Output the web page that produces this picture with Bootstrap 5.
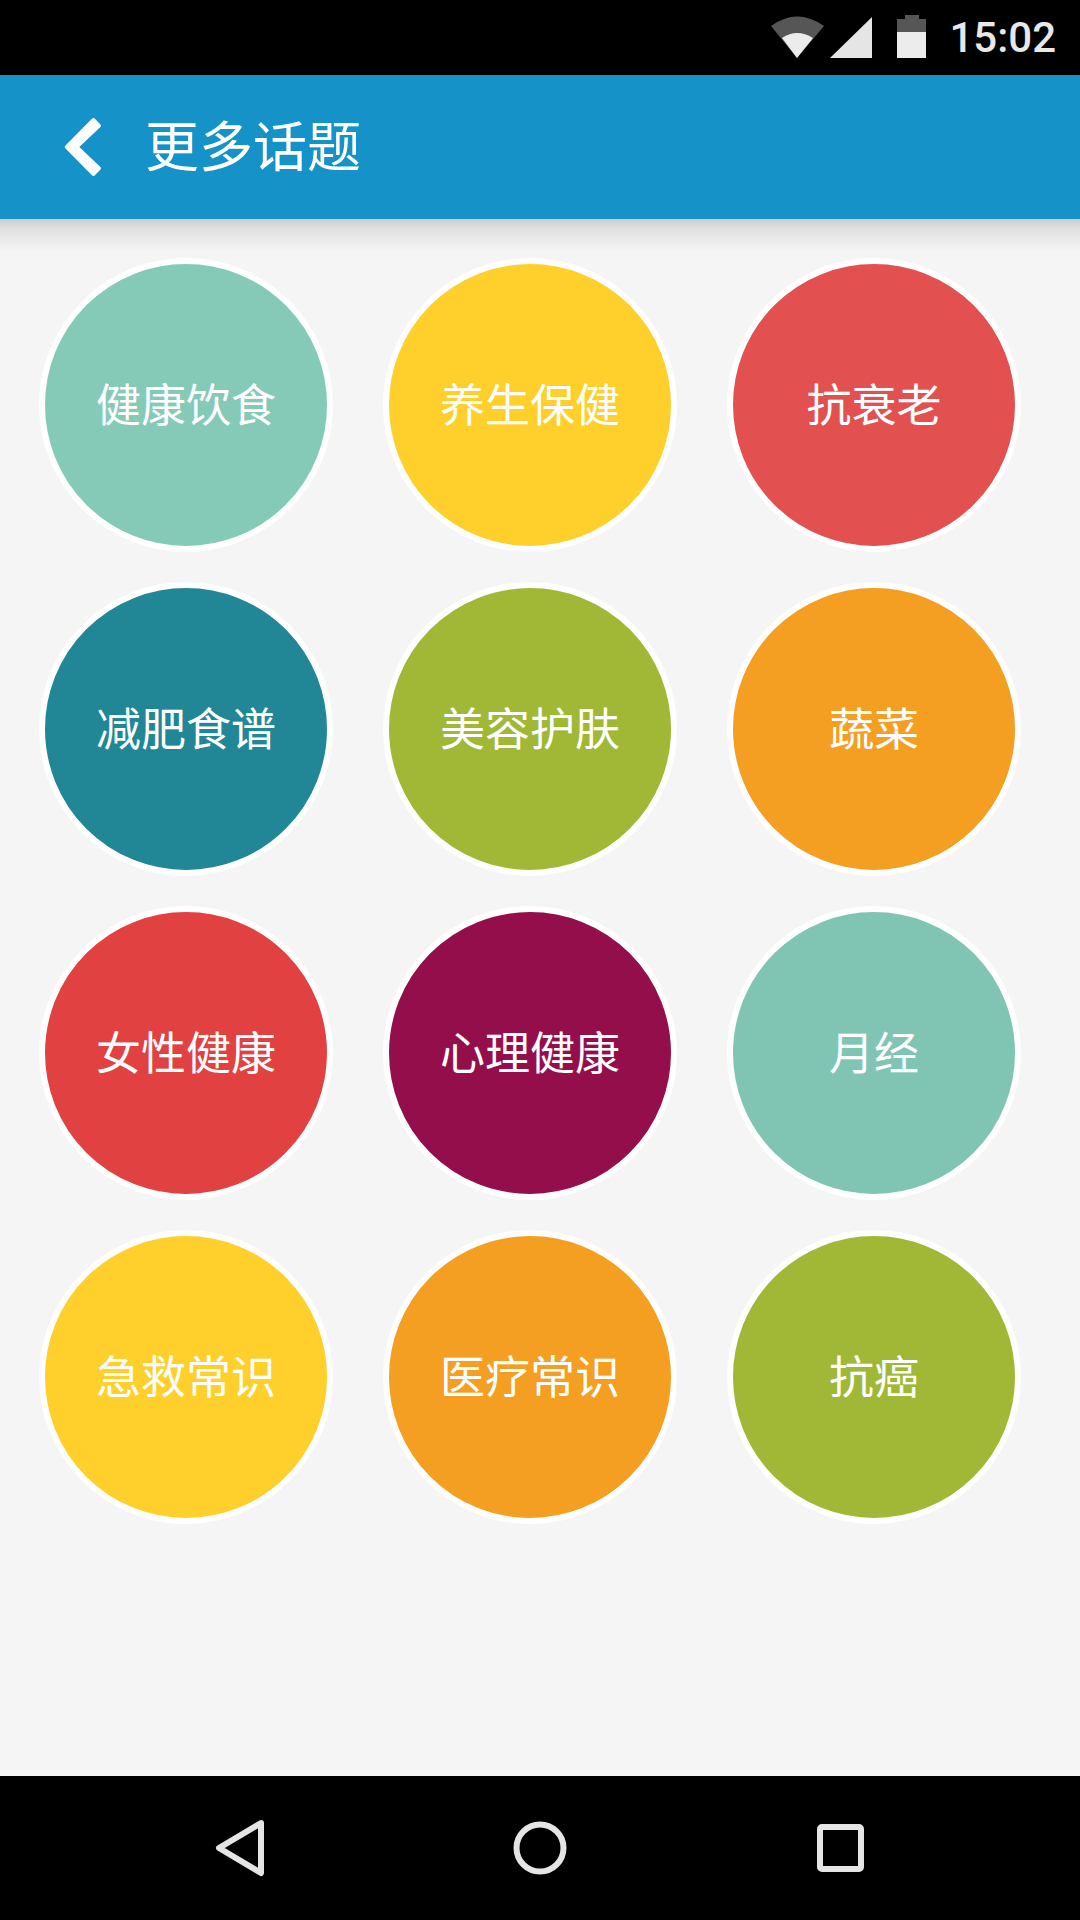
<!DOCTYPE html>
<html lang="zh-CN">

<head>
    <meta charset="UTF-8">
    <meta name="viewport" content="width=device-width, initial-scale=1.0">
    <title>更多话题</title>
    <link href="https://cdn.jsdelivr.net/npm/bootstrap@5.3.0/dist/css/bootstrap.min.css" rel="stylesheet">
    <style>
        body {
            width: 1080px;
            height: 1920px;
            background: #f5f5f5;
            font-family: "Noto Sans CJK SC", sans-serif;
            overflow: hidden;
        }

        .status-strip {
            height: 75px;
            background: #000;
            color: #e8e8e8;
            font-family: Roboto, sans-serif;
            font-size: 42px;
            font-weight: 500;
            line-height: 1;
            padding-right: 24px;
        }

        .status-icons {
            width: 160px;
            height: 75px;
            margin-right: 21px;
        }

        .title-bar {
            height: 144px;
            background: #1593c8;
            color: #fff;
            z-index: 2;
        }

        .title-bar::after {
            content: "";
            position: absolute;
            top: 100%;
            left: 0;
            right: 0;
            height: 32px;
            background: linear-gradient(#cbcbcb, #e0e0e0 30%, #f5f5f5);
        }

        .back-icon {
            width: 44px;
            height: 64px;
            margin-left: 60px;
            margin-right: 41px;
        }

        .title-text {
            font-size: 54px;
            line-height: 1;
            padding-bottom: 6px;
        }

        .topic-grid {
            display: grid;
            grid-template-columns: repeat(3, 294px);
            grid-auto-rows: 294px;
            gap: 30px 50px;
            padding: 39px 0 0 39px;
        }

        .topic-circle {
            border: 6px solid #fff;
            color: #fff;
            font-size: 45px;
            line-height: 1;
            padding-bottom: 5px;
        }

        .topic-mint { background: #85cab7; }
        .topic-yellow { background: #ffcf2b; }
        .topic-coral { background: #e25050; }
        .topic-teal { background: #218797; }
        .topic-olive { background: #a0b836; }
        .topic-orange { background: #f49e22; }
        .topic-red { background: #e24141; }
        .topic-plum { background: #950e4c; }
        .topic-sage { background: #80c4b3; }

        .nav-strip {
            height: 144px;
            background: #000;
        }

        .nav-strip svg {
            position: absolute;
            top: 0;
            left: 0;
        }
    </style>
</head>

<body class="d-flex flex-column">

    <div class="status-strip d-flex justify-content-end align-items-center">
        <svg class="status-icons" viewBox="770 0 160 75">
            <path d="M773 26Q799 7 826 26L799 58Z" fill="#565656" />
            <path d="M784 38Q799 28 815 38L799 58Z" fill="#ececec" />
            <path d="M832 58L874 17V58Z" fill="#e5e5e5" />
            <path d="M899 19H907V15H921V19H928V32H899Z" fill="#565656" />
            <path d="M899 32H928V58H899Z" fill="#ececec" />
        </svg>
        <span>15:02</span>
    </div>

    <div class="title-bar position-relative d-flex align-items-center">
        <svg class="back-icon" viewBox="60 116 44 64">
            <path d="M93.4 120.8L99.2 126.8L76.8 148L99.2 169.2L93.4 175.2L66.5 148Z" fill="#fff" stroke="#fff" stroke-width="3.5" stroke-linejoin="round" />
        </svg>
        <span class="title-text">更多话题</span>
    </div>

    <div class="topic-grid flex-grow-1">
        <div class="topic-circle topic-mint rounded-circle d-flex align-items-center justify-content-center">健康饮食</div>
        <div class="topic-circle topic-yellow rounded-circle d-flex align-items-center justify-content-center">养生保健</div>
        <div class="topic-circle topic-coral rounded-circle d-flex align-items-center justify-content-center">抗衰老</div>
        <div class="topic-circle topic-teal rounded-circle d-flex align-items-center justify-content-center">减肥食谱</div>
        <div class="topic-circle topic-olive rounded-circle d-flex align-items-center justify-content-center">美容护肤</div>
        <div class="topic-circle topic-orange rounded-circle d-flex align-items-center justify-content-center">蔬菜</div>
        <div class="topic-circle topic-red rounded-circle d-flex align-items-center justify-content-center">女性健康</div>
        <div class="topic-circle topic-plum rounded-circle d-flex align-items-center justify-content-center">心理健康</div>
        <div class="topic-circle topic-sage rounded-circle d-flex align-items-center justify-content-center">月经</div>
        <div class="topic-circle topic-yellow rounded-circle d-flex align-items-center justify-content-center">急救常识</div>
        <div class="topic-circle topic-orange rounded-circle d-flex align-items-center justify-content-center">医疗常识</div>
        <div class="topic-circle topic-olive rounded-circle d-flex align-items-center justify-content-center">抗癌</div>
    </div>

    <div class="nav-strip position-relative">
        <svg width="1080" height="144" viewBox="0 1776 1080 144">
            <path d="M261 1823L219 1848L261 1873Z" fill="none" stroke="#e5e5e5" stroke-width="6" stroke-linejoin="round" />
            <circle cx="540" cy="1848" r="23.5" fill="none" stroke="#e5e5e5" stroke-width="6" />
            <rect x="820" y="1827" width="41" height="42" rx="2" fill="none" stroke="#e5e5e5" stroke-width="6" />
        </svg>
    </div>

    <script src="https://cdn.jsdelivr.net/npm/bootstrap@5.3.0/dist/js/bootstrap.bundle.min.js"></script>
</body>

</html>
